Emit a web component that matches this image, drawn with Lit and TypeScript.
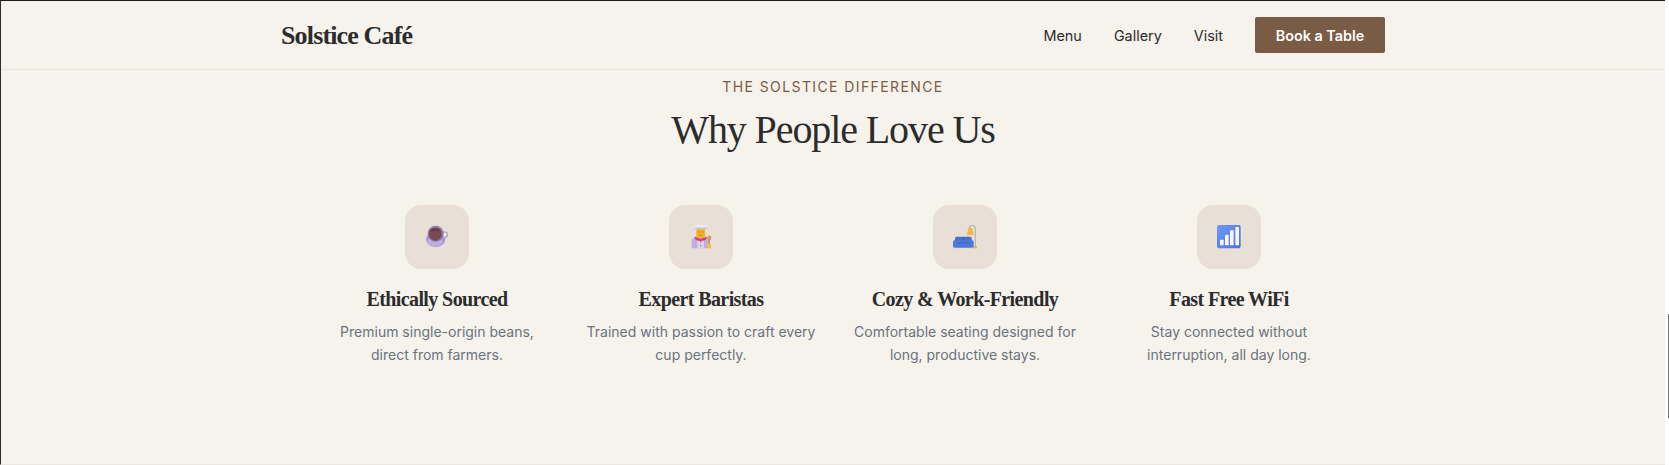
import { LitElement, html, css, svg } from "lit";
import { customElement } from "lit/decorators.js";

const cup = svg`<svg viewBox="90 90 72 72" class="ico">
  <ellipse cx="122" cy="133" rx="29" ry="23" fill="#a898d2"/>
  <ellipse cx="120" cy="140" rx="23" ry="13" fill="#bcaee0"/>
  <circle cx="149" cy="119" r="8" fill="#efe9ee" stroke="#ab9cd6" stroke-width="3.5"/>
  <circle cx="122" cy="116" r="24" fill="#8d7aa8"/>
  <circle cx="121" cy="118" r="19" fill="#7a4c52"/>
  <path d="M103 112a19 19 0 0 1 36 0a22 10 0 0 0-36 0z" fill="#65404a"/>
</svg>`;

const chef = svg`<svg viewBox="87 90 72 72" class="ico">
  <path d="M95 160v-18q0-15 15-18h22q16 3 18 18v18z" fill="#bdb1da"/>
  <path d="M112 160v-30h20v30z" fill="#d9d2ea"/>
  <circle cx="122" cy="141" r="2" fill="#8e7bb5"/><circle cx="122" cy="152" r="2" fill="#8e7bb5"/>
  <path d="M103 125l19 6 19-6-4 10-15 4-15-4z" fill="#d83f72"/>
  <rect x="109" y="100" width="26" height="28" rx="6" fill="#f5b31a"/>
  <path d="M113 111h6M125 111h6M118 121h8" stroke="#b06a1a" stroke-width="2"/>
  <path d="M105 90h36v11h-36z" fill="#ece8f1"/>
  <path d="M105 98h36v5h-36z" fill="#c9c2d8"/>
  <rect x="146" y="130" width="4" height="22" fill="#c98e63"/>
  <ellipse cx="148" cy="129" rx="6" ry="8" fill="#d89a70"/>
  <rect x="142" y="146" width="11" height="14" rx="3" fill="#f6c22a"/>
</svg>`;

const sofa = svg`<svg viewBox="84 90 72 72" class="ico">
  <path d="M133 102v-2q0-9 9-9h1q8 0 8 9v56" fill="none" stroke="#b4b3ba" stroke-width="3.5"/>
  <path d="M130 100h12l4 18q0 3-4 3h-13q-4 0-3-3z" fill="#f3b941"/>
  <rect x="143" y="154" width="14" height="6" rx="2" fill="#f2b32e"/>
  <rect x="90" y="125" width="50" height="26" rx="5" fill="#4a71c9"/>
  <path d="M115 127v14" stroke="#34559f" stroke-width="2"/>
  <rect x="84" y="136" width="62" height="22" rx="5" fill="#4f79d6"/>
  <rect x="96" y="142" width="38" height="3" fill="#4468bd"/>
  <rect x="88" y="158" width="4" height="2" fill="#8f9fca"/><rect x="138" y="158" width="4" height="2" fill="#8f9fca"/>
</svg>`;

const signal = svg`<svg viewBox="81 90 72 72" class="ico">
  <defs><linearGradient id="sg" x1="0" y1="0" x2="1" y2="1"><stop offset="0" stop-color="#6a9cf5"/><stop offset="1" stop-color="#4f70dc"/></linearGradient></defs>
  <rect x="81" y="89" width="71" height="71" rx="8" fill="url(#sg)"/>
  <rect x="90" y="134" width="11" height="17" rx="1.5" fill="#f6f4fc"/>
  <rect x="105" y="119" width="11" height="32" rx="1.5" fill="#f6f4fc"/>
  <rect x="120" y="106" width="11" height="45" rx="1.5" fill="#f6f4fc"/>
  <rect x="136" y="96" width="11" height="55" rx="1.5" fill="#f6f4fc"/>
</svg>`;

const features = [
  { icon: cup, title: "Ethically Sourced", lines: "Premium single-origin beans, direct from farmers." },
  { icon: chef, title: "Expert Baristas", lines: "Trained with passion to craft every cup perfectly." },
  { icon: sofa, title: "Cozy & Work-Friendly", lines: "Comfortable seating designed for long, productive stays." },
  { icon: signal, title: "Fast Free WiFi", lines: "Stay connected without interruption, all day long." },
];

@customElement("app-root")
export class AppRoot extends LitElement {
  static styles = css`
    :host {
      display: block;
      position: relative;
      width: 1669px;
      height: 465px;
      background: #fff;
      overflow: hidden;
      font-family: Inter, "Liberation Sans", sans-serif;
      color: #2c2c2c;
    }
    .page {
      box-sizing: border-box;
      width: 1665px;
      height: 465px;
      background: #f6f3ec;
      border-top: 1px solid #1c1c1c;
      border-left: 1px solid #2c2c2c;
      border-bottom: 1px solid #ebe7df;
      display: flex;
      flex-direction: column;
    }
    header {
      height: 68px;
      flex: none;
      border-bottom: 1px solid #ebe7df;
    }
    .bar {
      box-sizing: border-box;
      max-width: 1200px;
      height: 100%;
      margin: 0 auto;
      padding: 0 48px;
      display: flex;
      align-items: center;
      justify-content: space-between;
    }
    .logo {
      font-family: "Liberation Serif", serif;
      font-size: 26px;
      line-height: 32px;
      padding-top: 1px;
      font-weight: 700;
      letter-spacing: -0.85px;
      color: #2c2c2c;
    }
    nav {
      display: flex;
      align-items: center;
      gap: 32px;
      font-size: 14.4px;
      font-weight: 400;
    }
    .btn {
      box-sizing: border-box;
      width: 130px;
      height: 36px;
      display: flex;
      align-items: center;
      justify-content: center;
      background: #7a5c45;
      color: #fff;
      border-radius: 2px;
      font-weight: 600;
    }
    main {
      display: flex;
      flex-direction: column;
      align-items: center;
      padding-top: 7px;
    }
    .eyebrow {
      font-size: 14px;
      line-height: 20px;
      letter-spacing: 1.4px;
      color: #7a5c45;
      text-transform: uppercase;
    }
    h2 {
      margin: 5px 0 0;
      font-family: "Liberation Serif", serif;
      font-size: 40px;
      line-height: 56px;
      font-weight: 400;
      letter-spacing: -1.1px;
      color: #2c2c2c;
    }
    .grid {
      margin-top: 47px;
      display: grid;
      grid-template-columns: repeat(4, 232px);
      gap: 32px;
    }
    .card {
      display: flex;
      flex-direction: column;
      align-items: center;
      text-align: center;
    }
    .tile {
      width: 64px;
      height: 64px;
      border-radius: 16px;
      background: #e8dfd6;
      display: flex;
      align-items: center;
      justify-content: center;
    }
    .ico {
      width: 24px;
      height: 24px;
      display: block;
    }
    h3 {
      margin: 16px 0 0;
      font-family: "Liberation Serif", serif;
      font-size: 20px;
      line-height: 28px;
      font-weight: 700;
      letter-spacing: -0.6px;
      color: #2c2c2c;
    }
    p {
      margin: 7px 0 0;
      font-size: 14px;
      line-height: 23px;
      color: #6b7280;
    }
    .thumb {
      position: absolute;
      left: 1668px;
      top: 314px;
      width: 1px;
      height: 104px;
      background: #777;
    }
  `;

  render() {
    return html`
      <div class="page">
        <header>
          <div class="bar">
            <div class="logo">Solstice Café</div>
            <nav>
              <span>Menu</span><span>Gallery</span><span>Visit</span>
              <span class="btn">Book a Table</span>
            </nav>
          </div>
        </header>
        <main>
          <div class="eyebrow">The Solstice Difference</div>
          <h2>Why People Love Us</h2>
          <div class="grid">
            ${features.map(
              (f) => html`<div class="card">
                <div class="tile">${f.icon}</div>
                <h3>${f.title}</h3>
                <p>${f.lines}</p>
              </div>`
            )}
          </div>
        </main>
      </div>
      <div class="thumb"></div>
    `;
  }
}
